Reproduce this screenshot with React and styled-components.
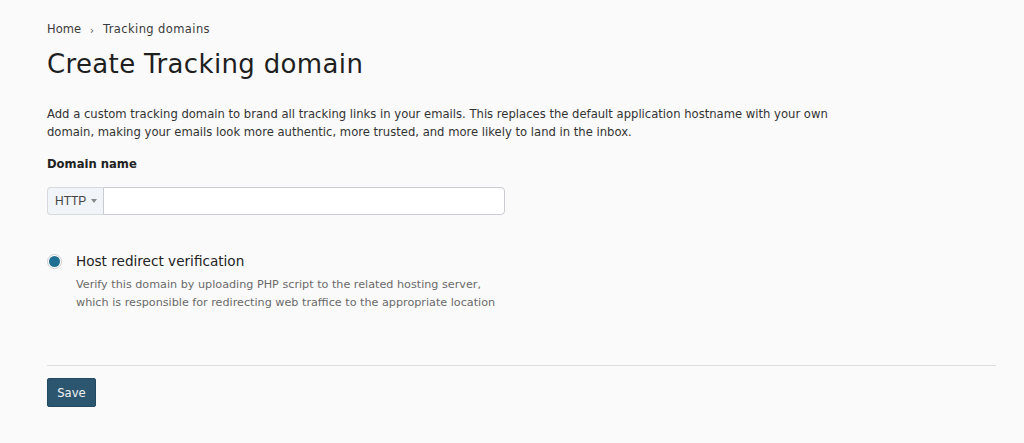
import React from "react";
import styled, { createGlobalStyle } from "styled-components";

const Global = createGlobalStyle`
  html, body { margin: 0; padding: 0; background: #fafafa; }
  body { font-family: "DejaVu Sans", "Noto Sans", sans-serif; color: #222; }
  * { box-sizing: border-box; }
`;

const Page = styled.div`
  padding: 20px 28px 0 47px;
  display: flex;
  flex-direction: column;
`;

const Crumbs = styled.nav`
  display: flex;
  align-items: center;
  gap: 9px;
  font-size: 11.5px;
  color: #3a3a3a;
  height: 17px;
`;

const Crumb = styled.span`
  letter-spacing: ${(p) => (p.$wide ? "0.4px" : "0")};
`;

const Sep = styled.span`
  font-size: 10px;
  color: #555;
  margin-top: 3px;
`;

const Title = styled.h1`
  margin: 9px 0 0;
  font-size: 26px;
  font-weight: 400;
  color: #1f1f1f;
  letter-spacing: 0.35px;
  line-height: 36px;
`;

const Intro = styled.p`
  margin: 23px 0 0;
  font-size: 11.6px;
  line-height: 18px;
  color: #333;
  max-width: 800px;
`;

const Label = styled.div`
  margin-top: 14px;
  font-size: 11.6px;
  font-weight: 700;
  color: #222;
  line-height: 18px;
`;

const InputGroup = styled.div`
  margin-top: 14px;
  display: flex;
  width: 458px;
  height: 28px;
`;

const Addon = styled.div`
  display: flex;
  align-items: center;
  gap: 5px;
  padding: 0 6px 0 7px;
  background: #f1f4f8;
  border: 1px solid #d6d9dd;
  border-right: none;
  border-radius: 4px 0 0 4px;
  font-family: "Liberation Sans", Arial, sans-serif;
  font-size: 12px;
  color: #444;
`;

const Caret = styled.span`
  width: 0;
  height: 0;
  border-left: 3.5px solid transparent;
  border-right: 3.5px solid transparent;
  border-top: 4px solid #888;
`;

const Input = styled.input`
  flex: 1;
  border: 1px solid #c9ccd0;
  border-radius: 0 4px 4px 0;
  background: #fff;
  outline: none;
  padding: 0 8px;
`;

const Option = styled.label`
  margin-top: 37px;
  display: flex;
  gap: 14px;
  align-items: flex-start;
`;

const Radio = styled.span`
  margin-top: 2px;
  width: 15px;
  height: 15px;
  border-radius: 50%;
  border: 1px solid #cfcfcf;
  background: #fff;
  display: flex;
  align-items: center;
  justify-content: center;
  flex-shrink: 0;
  &::after {
    content: "";
    width: 11px;
    height: 11px;
    border-radius: 50%;
    background: #1f6f93;
  }
`;

const OptionText = styled.div`
  display: flex;
  flex-direction: column;
`;

const OptionTitle = styled.div`
  font-size: 13.6px;
  line-height: 18px;
  color: #222;
`;

const OptionDesc = styled.div`
  margin-top: 6px;
  font-size: 11.2px;
  line-height: 18px;
  color: #6a6a6a;
`;

const Divider = styled.hr`
  margin: 53px 0 0;
  border: none;
  border-top: 1px solid #dedede;
`;

const SaveButton = styled.button`
  margin-top: 12px;
  align-self: flex-start;
  width: 49px;
  height: 29px;
  background: #2c5670;
  color: #f2f2f2;
  border: 1px solid #244a61;
  border-radius: 2px;
  font-family: inherit;
  font-size: 11.6px;
  padding: 0;
`;

export default function App() {
  return (
    <>
      <Global />
      <Page>
        <Crumbs>
          <Crumb>Home</Crumb>
          <Sep>›</Sep>
          <Crumb $wide>Tracking domains</Crumb>
        </Crumbs>
        <Title>Create Tracking domain</Title>
        <Intro>
          Add a custom tracking domain to brand all tracking links in your emails. This replaces the default application hostname with your own domain, making your emails look more authentic, more trusted, and more likely to land in the inbox.
        </Intro>
        <Label>Domain name</Label>
        <InputGroup>
          <Addon>HTTP <Caret /></Addon>
          <Input />
        </InputGroup>
        <Option>
          <Radio />
          <OptionText>
            <OptionTitle>Host redirect verification</OptionTitle>
            <OptionDesc>
              Verify this domain by uploading PHP script to the related hosting server,
              <br />
              which is responsible for redirecting web traffice to the appropriate location
            </OptionDesc>
          </OptionText>
        </Option>
        <Divider />
        <SaveButton>Save</SaveButton>
      </Page>
    </>
  );
}
